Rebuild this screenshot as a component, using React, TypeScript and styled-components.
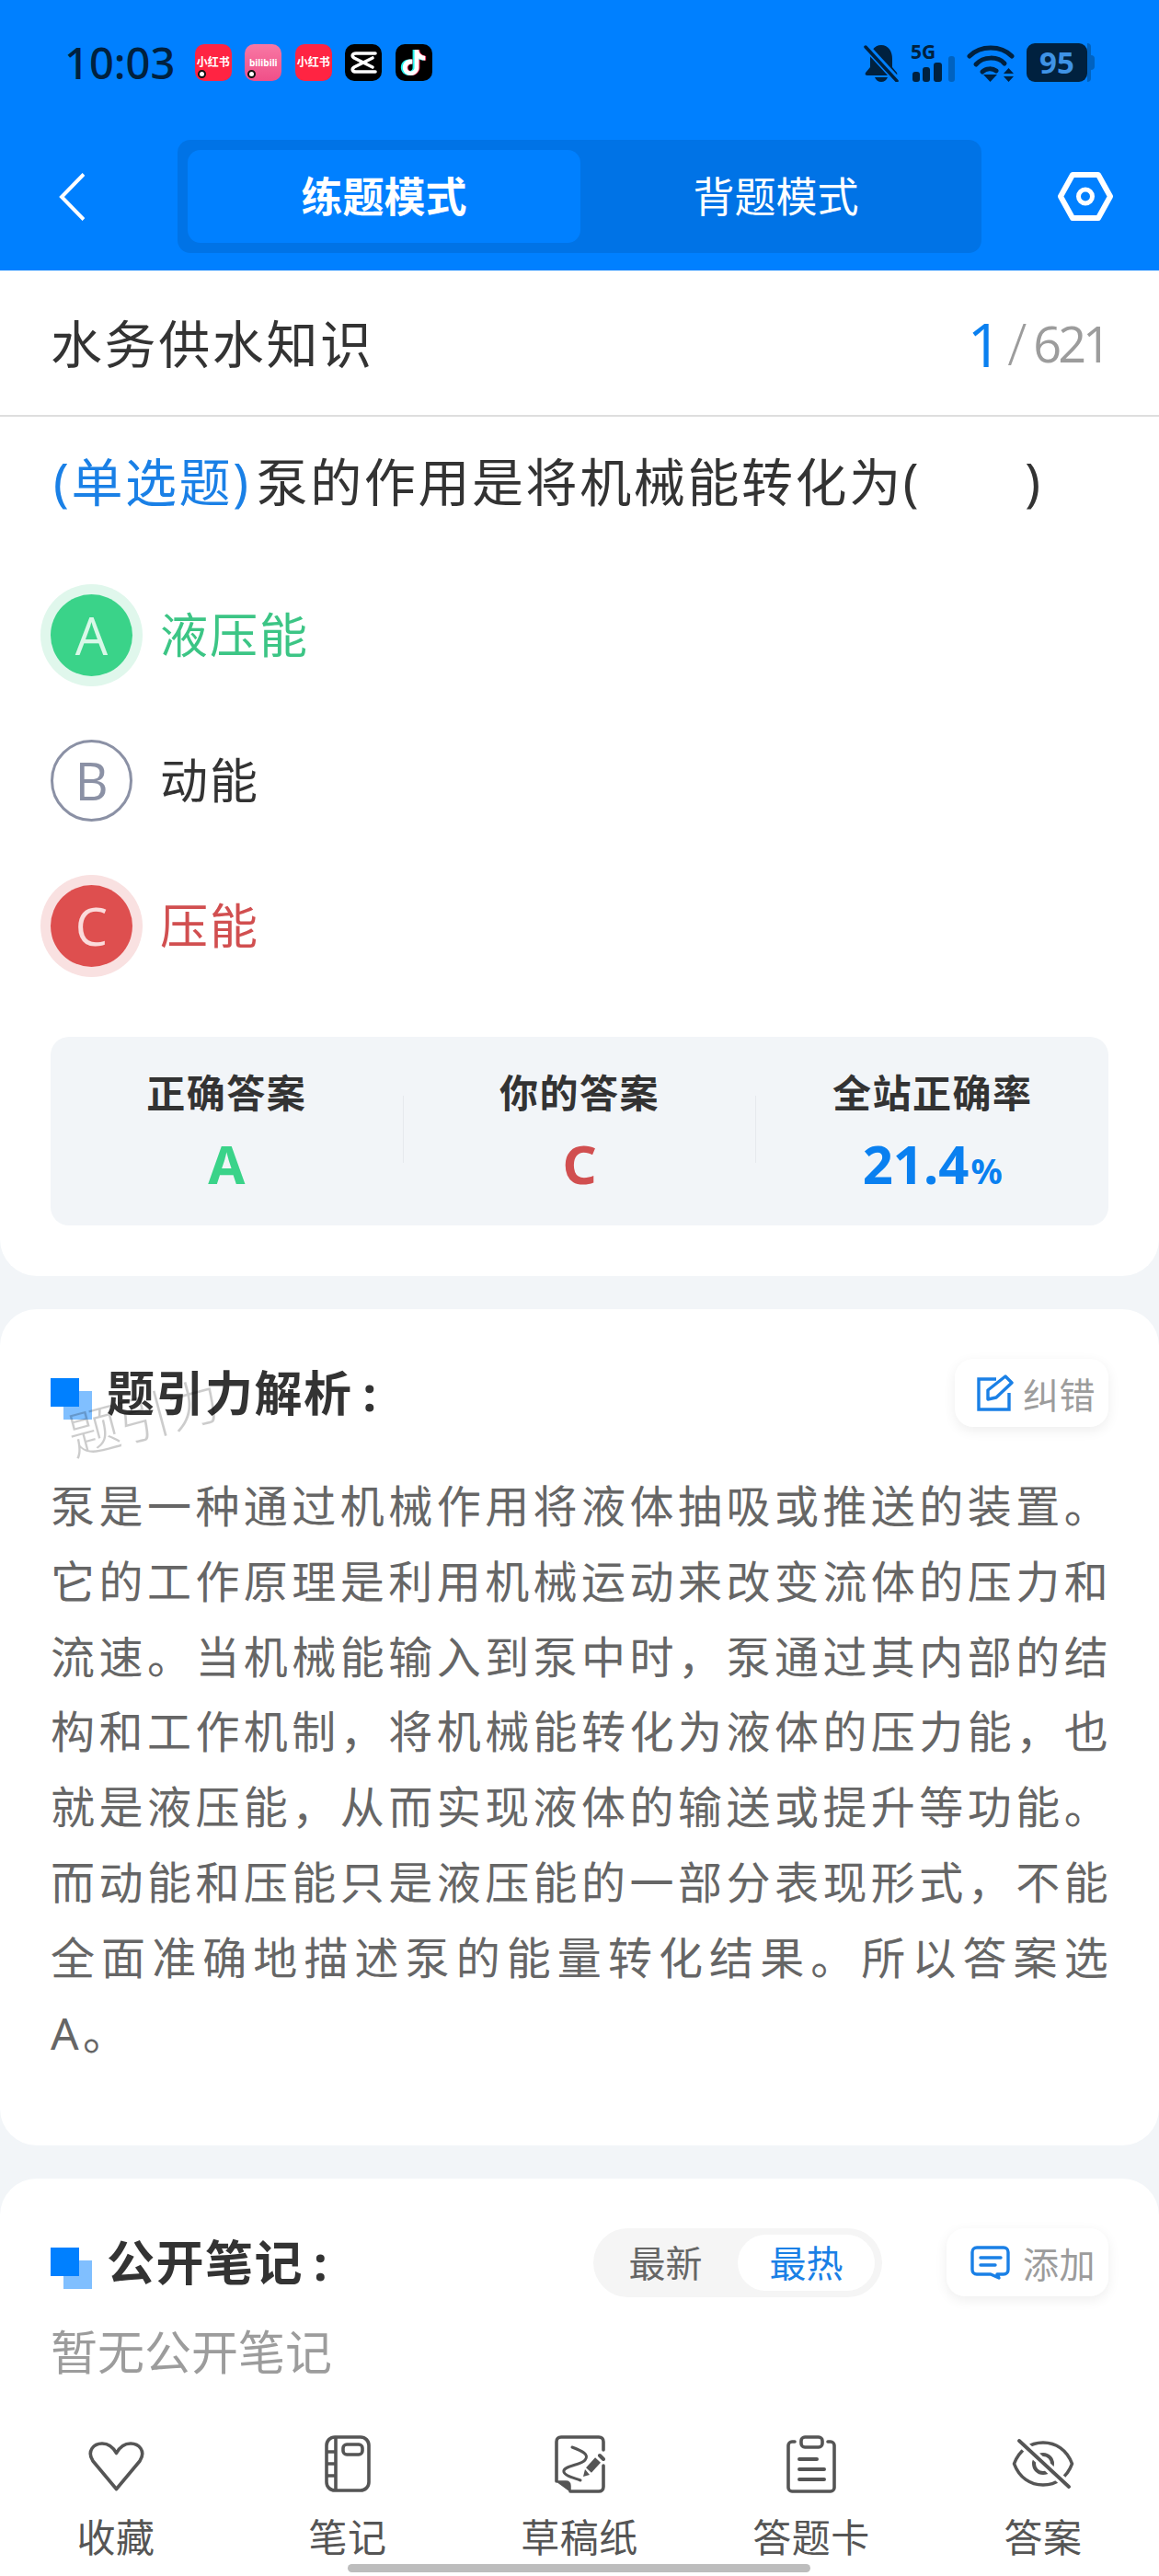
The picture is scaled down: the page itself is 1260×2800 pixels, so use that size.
import React from "react";
import styled, { createGlobalStyle } from "styled-components";
import { SiTiktok } from "react-icons/si";

const GlobalStyle = createGlobalStyle`
  html, body { margin: 0; padding: 0; background: #f2f5f8; }
  * { box-sizing: border-box; }
`;

const Page = styled.div`
  width: 1260px;
  height: 2800px;
  overflow: hidden;
  display: flex;
  flex-direction: column;
  background: #f2f5f8;
  font-family: "Noto Sans", "Noto Sans CJK SC", sans-serif;
`;

const Header = styled.header`
  background: #0080ff;
  height: 294px;
  flex: none;
`;

const StatusBar = styled.div`
  height: 136px;
  padding: 0 70px;
  display: flex;
  align-items: center;
  justify-content: space-between;
`;

const StatusGroup = styled.div<{ $gap: number }>`
  display: flex;
  align-items: center;
  gap: ${(p) => p.$gap}px;
`;

const Time = styled.span`
  font-size: 47px;
  line-height: 56px;
  font-weight: 500;
  color: #00213f;
  margin-right: 7px;
`;

const AppIcon = styled.div<{ $bg: string }>`
  position: relative;
  width: 40px;
  height: 40px;
  border-radius: 10px;
  background: ${(p) => p.$bg};
  color: #fff;
  display: flex;
  align-items: center;
  justify-content: center;
  overflow: hidden;
`;

const AppLabel = styled.span<{ $size: number }>`
  font-size: ${(p) => p.$size}px;
  line-height: 14px;
  font-weight: 700;
  white-space: nowrap;
`;

const BadgeDot = styled.i`
  position: absolute;
  left: 3px;
  bottom: 3px;
  width: 9px;
  height: 9px;
  border-radius: 50%;
  background: #fff;
  border: 2.5px solid #111;
`;

const SignalSvg = styled.svg`
  display: block;
  margin-top: -8px;
`;

const Battery = styled.div`
  position: relative;
  width: 66px;
  height: 42px;
  margin-right: 8px;
  border-radius: 9px;
  background: #00213f;
  color: #3f93e6;
  font-size: 33px;
  line-height: 42px;
  font-weight: 700;
  text-align: center;
  &::after {
    content: "";
    position: absolute;
    left: 66px;
    top: 0;
    width: 4px;
    height: 42px;
    border-radius: 0 6px 6px 0;
    background: #0062c0;
  }
  &::before {
    content: "";
    position: absolute;
    left: 70px;
    top: 13px;
    width: 4px;
    height: 16px;
    border-radius: 0 4px 4px 0;
    background: #0062c0;
  }
`;

const NavRow = styled.div`
  height: 158px;
  padding: 16px 50px 19px 64px;
  display: flex;
  align-items: center;
`;

const Tabs = styled.div`
  width: 874px;
  height: 123px;
  margin: 0 auto 0 101px;
  padding: 11px;
  border-radius: 14px;
  background: #0073e6;
  display: grid;
  grid-template-columns: 427px 1fr;
`;

const Tab = styled.div<{ $active?: boolean }>`
  border-radius: 14px;
  background: ${(p) => (p.$active ? "#0080ff" : "transparent")};
  color: #fff;
  font-size: 45px;
  line-height: 101px;
  font-weight: ${(p) => (p.$active ? 700 : 400)};
  text-align: center;
`;

const Main = styled.main`
  flex: 1;
  min-height: 0;
  display: flex;
  flex-direction: column;
  gap: 36px;
`;

const QuestionCard = styled.section`
  flex: none;
  background: #fff;
  border-radius: 0 0 40px 40px;
  padding-bottom: 55px;
`;

const TitleRow = styled.div`
  height: 159px;
  padding: 0 56px 0 55px;
  border-bottom: 2px solid #dedede;
  display: flex;
  align-items: center;
  justify-content: space-between;
`;

const SubjectTitle = styled.h1`
  margin: 0;
  font-size: 56px;
  line-height: 70px;
  font-weight: 400;
  letter-spacing: 2.6px;
  color: #333;
`;

const Counter = styled.div`
  display: flex;
  align-items: center;
  color: #9c9c9c;
  font-weight: 400;
  line-height: 80px;
  font-family: "Open Sans", "Noto Sans", sans-serif;
`;

const CounterNow = styled.span`
  font-size: 66px;
  color: #0a80f0;
  margin-right: 6px;
`;

const CounterSlash = styled.span`
  font-size: 62px;
  font-weight: 300;
  margin-right: 7px;
`;

const CounterRest = styled.span`
  font-size: 54px;
  letter-spacing: -4px;
`;

const Question = styled.p`
  margin: 29px 55px 0 58px;
  font-size: 56px;
  line-height: 82px;
  letter-spacing: 2.6px;
  word-spacing: -1px;
  color: #333;
  white-space: pre;
`;

const QuestionType = styled.span`
  color: #1a80e6;
  margin-right: 6px;
`;

const Options = styled.div`
  margin-top: 47px;
  padding: 0 55px;
`;

const OptionRow = styled.div`
  height: 158px;
  display: flex;
  align-items: center;
  gap: 30px;
`;

const optionColors = {
  right: { badge: "#3ad389", halo: "#e0f7ec", text: "#3cc585", letter: "#d9f8e8" },
  wrong: { badge: "#de4f4f", halo: "#f9e1e1", text: "#d14f50", letter: "#fbdcdc" },
  idle: { badge: "#fff", halo: "transparent", text: "#333", letter: "#8b91a5" },
};

type OptionState = keyof typeof optionColors;

const OptionBadge = styled.div<{ $state: OptionState }>`
  flex: none;
  width: 89px;
  height: 89px;
  border-radius: 50%;
  background: ${(p) => optionColors[p.$state].badge};
  color: ${(p) => optionColors[p.$state].letter};
  border: ${(p) => (p.$state === "idle" ? "3px solid #8b91a5" : "none")};
  box-shadow: 0 0 0 11px ${(p) => optionColors[p.$state].halo};
  font-family: "Open Sans", "Noto Sans", sans-serif;
  font-size: 56px;
  font-weight: 400;
  display: flex;
  align-items: center;
  justify-content: center;
`;

const OptionText = styled.span<{ $state: OptionState }>`
  font-size: 52px;
  line-height: 70px;
  letter-spacing: 2px;
  color: ${(p) => optionColors[p.$state].text};
`;

const StatBox = styled.div`
  margin: 42px 55px 0;
  height: 205px;
  padding: 0 0 5px;
  border-radius: 20px;
  background: #f2f5f8;
  display: flex;
  align-items: center;
`;

const Stat = styled.div`
  flex: 1;
  text-align: center;
`;

const StatDivider = styled.div`
  flex: none;
  width: 1px;
  height: 73px;
  background: #e6e9ed;
`;

const StatLabel = styled.div`
  font-size: 42px;
  line-height: 60px;
  font-weight: 700;
  letter-spacing: 1.5px;
  color: #333;
`;

const StatValue = styled.div<{ $color: string }>`
  margin-top: 15px;
  font-size: 58px;
  line-height: 64px;
  font-weight: 700;
  color: ${(p) => p.$color};
`;

const StatUnit = styled.span`
  font-size: 38px;
  line-height: 1;
  margin-left: 2px;
`;

const Card = styled.section<{ $fill?: boolean }>`
  position: relative;
  background: #fff;
  border-radius: 40px 40px ${(p) => (p.$fill ? "0 0" : "40px 40px")};
  padding: 54px 55px ${(p) => (p.$fill ? "0" : "82px")};
  flex: ${(p) => (p.$fill ? 1 : "none")};
`;

const CardHead = styled.div`
  display: flex;
  align-items: center;
  height: 74px;
`;

const HeadMark = styled.div`
  position: relative;
  flex: none;
  width: 45px;
  height: 45px;
  margin-right: 16px;
  margin-top: 12px;
  background: linear-gradient(#80bfff, #80bfff) 14px 14px / 31px 31px no-repeat;
  &::before {
    content: "";
    position: absolute;
    left: 0;
    top: 0;
    width: 31px;
    height: 31px;
    background: #0080ff;
  }
`;

const HeadTitle = styled.h2`
  flex: 1;
  margin: 0;
  font-size: 52px;
  line-height: 70px;
  font-weight: 700;
  letter-spacing: 1.5px;
  color: #333;
`;

const HeadColon = styled.span`
  margin-left: 11px;
`;

const Watermark = styled.span`
  position: absolute;
  left: 72px;
  top: 86px;
  font-size: 56px;
  line-height: 62px;
  font-weight: 300;
  color: rgba(0, 0, 0, 0.2);
  transform: rotate(-15deg);
  pointer-events: none;
`;

const ActionButton = styled.div<{ $left: number; $gap: number }>`
  flex: none;
  height: 74px;
  padding: 0 14px 0 ${(p) => p.$left}px;
  border-radius: 20px;
  background: #fff;
  box-shadow: 0 4px 14px rgba(0, 0, 0, 0.07);
  display: flex;
  align-items: center;
  gap: ${(p) => p.$gap}px;
  color: #9c9c9c;
  font-size: 39px;
  letter-spacing: 0.5px;
`;

const Analysis = styled.p`
  margin: 45px -4px 0 0;
  font-size: 48px;
  line-height: 81.8px;
  letter-spacing: 4.3px;
  text-align: justify;
  color: #666;
`;

const SortSwitch = styled.div`
  flex: none;
  width: 314px;
  height: 75px;
  margin-right: 70px;
  padding: 7px 8px 7px 0;
  border-radius: 38px;
  background: #f5f5f5;
  display: grid;
  grid-template-columns: 157px 149px;
`;

const SortOption = styled.div<{ $active?: boolean }>`
  border-radius: 31px;
  background: ${(p) => (p.$active ? "#fff" : "transparent")};
  color: ${(p) => (p.$active ? "#1a80e6" : "#666")};
  font-size: 40px;
  line-height: 61px;
  text-align: center;
`;

const EmptyNote = styled.div`
  margin-top: 30px;
  font-size: 51px;
  line-height: 60px;
  color: #9c9c9c;
`;

const BottomBar = styled.nav`
  position: relative;
  flex: none;
  height: 180px;
  padding-top: 24px;
  background: #fff;
  display: grid;
  grid-template-columns: repeat(5, 1fr);
`;

const BarItem = styled.div`
  display: flex;
  flex-direction: column;
  align-items: center;
`;

const BarIcon = styled.div`
  height: 68px;
  display: flex;
  align-items: center;
  justify-content: center;
`;

const BarLabel = styled.span`
  margin-top: 21px;
  font-size: 42px;
  line-height: 50px;
  letter-spacing: 0.5px;
  color: #555;
`;

const HomeIndicator = styled.div`
  position: absolute;
  left: 378px;
  bottom: 4px;
  width: 503px;
  height: 9px;
  border-radius: 5px;
  background: #bdbdbd;
`;

const options: { key: string; text: string; state: OptionState }[] = [
  { key: "A", text: "液压能", state: "right" },
  { key: "B", text: "动能", state: "idle" },
  { key: "C", text: "压能", state: "wrong" },
];

const analysis =
  "泵是一种通过机械作用将液体抽吸或推送的装置。它的工作原理是利用机械运动来改变流体的压力和流速。当机械能输入到泵中时，泵通过其内部的结构和工作机制，将机械能转化为液体的压力能，也就是液压能，从而实现液体的输送或提升等功能。而动能和压能只是液压能的一部分表现形式，不能全面准确地描述泵的能量转化结果。所以答案选A。";

function CapCutIcon() {
  return (
    <svg width="30" height="26" viewBox="0 0 30 26" fill="none" stroke="#fff" strokeWidth="3.6" strokeLinecap="round">
      <path d="M28 3H7C3 3 2 6 5 8L25 18" />
      <path d="M28 23H7C3 23 2 20 5 18L25 8" />
    </svg>
  );
}

function BellOff() {
  return (
    <svg width="38" height="41" viewBox="0 0 38 41">
      <path d="M19 1C11 1 7 8 7 16V25L2 31C1 33 2 34 4 34H34C36 34 37 33 36 31L31 25V16C31 8 27 1 19 1Z" fill="#00213f" />
      <path d="M12 36H26C25 39 22 41 19 41C16 41 13 39 12 36Z" fill="#00213f" />
      <path d="M1 1L37 40" stroke="#0080ff" strokeWidth="8" />
      <path d="M2 3L36 40" stroke="#00213f" strokeWidth="3.5" strokeLinecap="round" />
    </svg>
  );
}

function Signal() {
  return (
    <SignalSvg width="48" height="49" viewBox="0 -8 48 49">
      <text x="0" y="16" fontSize="21" fontWeight="700" fill="#00213f" fontFamily="Noto Sans, sans-serif">5G</text>
      <rect x="2" y="30" width="8" height="11" rx="3" fill="#00213f" />
      <rect x="13" y="25" width="8" height="16" rx="3" fill="#00213f" />
      <rect x="25" y="20" width="9" height="21" rx="3" fill="#00213f" />
      <rect x="41" y="13" width="7" height="28" rx="3" fill="#0062c0" />
    </SignalSvg>
  );
}

function Wifi() {
  return (
    <svg width="52" height="41" viewBox="0 0 52 41" fill="none" stroke="#00213f" strokeWidth="5" strokeLinecap="round">
      <path d="M3 13C15 1 37 1 49 13" />
      <path d="M10 22C18 13 34 13 41 21" />
      <path d="M17 30C21 26 28 26 32 29" />
      <path d="M18 33H33L25.5 41Z" fill="#00213f" stroke="none" />
      <path d="M40 32H51L45.5 26Z M40 35H51L45.5 41Z" fill="#00213f" stroke="none" />
    </svg>
  );
}

function BackIcon() {
  return (
    <svg width="28" height="52" viewBox="0 0 28 52" fill="none" stroke="#fff" strokeWidth="4">
      <path d="M27 1.5L3 26L27 50.5" />
    </svg>
  );
}

function SettingIcon() {
  return (
    <svg width="60" height="53" viewBox="0 0 60 53" fill="none" stroke="#fff" strokeLinejoin="round">
      <path d="M16 3H44L57 26.5L44 50H16L3 26.5Z" strokeWidth="6" />
      <circle cx="30" cy="26.5" r="7.5" strokeWidth="5" />
    </svg>
  );
}

function EditIcon() {
  return (
    <svg width="40" height="40" viewBox="0 0 40 40" fill="none" stroke="#1a80e6" strokeWidth="3.4">
      <path d="M21 5H2V38H35V20" />
      <path d="M12 17L31 2L38 9L21 25L12 27Z" strokeLinejoin="round" />
    </svg>
  );
}

function CommentIcon() {
  return (
    <svg width="43" height="37" viewBox="0 0 43 37" fill="none" stroke="#1a80e6" strokeWidth="3.4" strokeLinecap="round">
      <path d="M7 2H36C39 2 41 4 41 7V26C41 29 39 31 36 31H29L31 35L22 31H7C4 31 2 29 2 26V7C2 4 4 2 7 2Z" strokeLinejoin="round" />
      <path d="M11 13H33" />
      <path d="M11 21H27" />
    </svg>
  );
}

function HeartIcon() {
  return (
    <svg width="63" height="60" viewBox="0 -6 63 60" fill="none" stroke="#555" strokeWidth="3.6" strokeLinejoin="round">
      <path d="M31.5 51.5L6 21C-1 10 7 2 16 2C23 2 28 6 31.5 12.5C35 6 40 2 47 2C56 2 64 10 57 21Z" />
    </svg>
  );
}

function NotebookIcon() {
  return (
    <svg width="50" height="62" viewBox="0 0 50 62" fill="none" stroke="#555" strokeWidth="3.6">
      <rect x="2" y="2" width="46" height="58" rx="9" />
      <path d="M12 2V60M2 18H12M2 31H12M2 44H12" />
      <rect x="20" y="10" width="21" height="11" rx="4" />
    </svg>
  );
}

function SketchIcon() {
  return (
    <svg width="55" height="63" viewBox="0 0 55 63" fill="none" stroke="#555" strokeWidth="3.6" strokeLinecap="round">
      <path d="M2 50V7C2 4 4 2 7 2H48C51 2 53 4 53 7V16M53 33V56C53 59 51 61 48 61H17" />
      <path d="M2 50H12C15 50 17 52 17 55V61Z" fill="#555" stroke="#555" strokeWidth="1.5" strokeLinejoin="round" />
      <path d="M19 13C30 17 38 21 33 27C28 33 8 33 10 40C11 44 20 46 28 49" strokeWidth="3" />
      <path d="M37 38L47 27" strokeWidth="8" strokeLinecap="butt" />
      <path d="M33 37L38 43L31 45Z" fill="#555" stroke="none" />
      <path d="M49 22L53 26" strokeWidth="4" />
    </svg>
  );
}

function SheetIcon() {
  return (
    <svg width="54" height="63" viewBox="0 0 54 63" fill="none" stroke="#555" strokeWidth="3.6" strokeLinecap="round">
      <path d="M9 7H6C4 7 2 9 2 11V57C2 59 4 61 6 61H48C50 61 52 59 52 57V11C52 9 50 7 48 7H45" />
      <rect x="16" y="2" width="23" height="11" rx="4" />
      <path d="M14 26H33M14 37H41M14 48H41" strokeWidth="4" />
    </svg>
  );
}

function EyeOffIcon() {
  return (
    <svg width="68" height="54" viewBox="0 0 68 54" fill="none" stroke="#555" strokeWidth="3.6" strokeLinecap="round">
      <path d="M2.5 27C8 12 20 4 34 4C48 4 60 12 65.5 27C60 42 48 50 34 50C20 50 8 42 2.5 27Z" strokeLinejoin="round" />
      <circle cx="34" cy="27" r="10" strokeWidth="4" />
      <path d="M8 2L62 52" stroke="#fff" strokeWidth="10" strokeLinecap="butt" />
      <path d="M8 2L62 52" strokeWidth="3.8" />
    </svg>
  );
}

const barItems = [
  { label: "收藏", icon: <HeartIcon /> },
  { label: "笔记", icon: <NotebookIcon /> },
  { label: "草稿纸", icon: <SketchIcon /> },
  { label: "答题卡", icon: <SheetIcon /> },
  { label: "答案", icon: <EyeOffIcon /> },
];

export default function App() {
  return (
    <Page>
      <GlobalStyle />
      <Header>
        <StatusBar>
          <StatusGroup $gap={14.5}>
            <Time>10:03</Time>
            <AppIcon $bg="#ff2442">
              <AppLabel $size={12}>小红书</AppLabel>
              <BadgeDot />
            </AppIcon>
            <AppIcon $bg="linear-gradient(#f878a4, #f04f88)">
              <AppLabel $size={10}>bilibili</AppLabel>
              <BadgeDot />
            </AppIcon>
            <AppIcon $bg="#ff2442">
              <AppLabel $size={12}>小红书</AppLabel>
            </AppIcon>
            <AppIcon $bg="#000">
              <CapCutIcon />
            </AppIcon>
            <AppIcon $bg="#000">
              <SiTiktok size={28} style={{ filter: "drop-shadow(-1.5px 0 0 #25f4ee) drop-shadow(1.5px 0 0 #fe2c55)" }} />
            </AppIcon>
          </StatusGroup>
          <StatusGroup $gap={13}>
            <BellOff />
            <Signal />
            <Wifi />
            <Battery>95</Battery>
          </StatusGroup>
        </StatusBar>
        <NavRow>
          <BackIcon />
          <Tabs>
            <Tab $active>练题模式</Tab>
            <Tab>背题模式</Tab>
          </Tabs>
          <SettingIcon />
        </NavRow>
      </Header>

      <Main>
        <QuestionCard>
          <TitleRow>
            <SubjectTitle>水务供水知识</SubjectTitle>
            <Counter>
              <CounterNow>1</CounterNow>
              <CounterSlash>/</CounterSlash>
              <CounterRest>621</CounterRest>
            </Counter>
          </TitleRow>
          <Question>
            <QuestionType>(单选题)</QuestionType>泵的作用是将机械能转化为(       )
          </Question>
          <Options>
            {options.map((o) => (
              <OptionRow key={o.key}>
                <OptionBadge $state={o.state}>{o.key}</OptionBadge>
                <OptionText $state={o.state}>{o.text}</OptionText>
              </OptionRow>
            ))}
          </Options>
          <StatBox>
            <Stat>
              <StatLabel>正确答案</StatLabel>
              <StatValue $color="#3ad389">A</StatValue>
            </Stat>
            <StatDivider />
            <Stat>
              <StatLabel>你的答案</StatLabel>
              <StatValue $color="#d14f50">C</StatValue>
            </Stat>
            <StatDivider />
            <Stat>
              <StatLabel>全站正确率</StatLabel>
              <StatValue $color="#0a80f0">
                21.4<StatUnit>%</StatUnit>
              </StatValue>
            </Stat>
          </StatBox>
        </QuestionCard>

        <Card>
          <CardHead>
            <HeadMark />
            <HeadTitle>
              题引力解析<HeadColon>:</HeadColon>
            </HeadTitle>
            <ActionButton $left={24} $gap={10}>
              <EditIcon />
              纠错
            </ActionButton>
          </CardHead>
          <Watermark>题引力</Watermark>
          <Analysis>{analysis}</Analysis>
        </Card>

        <Card $fill>
          <CardHead>
            <HeadMark />
            <HeadTitle>
              公开笔记<HeadColon>:</HeadColon>
            </HeadTitle>
            <SortSwitch>
              <SortOption>最新</SortOption>
              <SortOption $active>最热</SortOption>
            </SortSwitch>
            <ActionButton $left={26} $gap={14}>
              <CommentIcon />
              添加
            </ActionButton>
          </CardHead>
          <EmptyNote>暂无公开笔记</EmptyNote>
        </Card>
      </Main>

      <BottomBar>
        {barItems.map((item) => (
          <BarItem key={item.label}>
            <BarIcon>{item.icon}</BarIcon>
            <BarLabel>{item.label}</BarLabel>
          </BarItem>
        ))}
        <HomeIndicator />
      </BottomBar>
    </Page>
  );
}
